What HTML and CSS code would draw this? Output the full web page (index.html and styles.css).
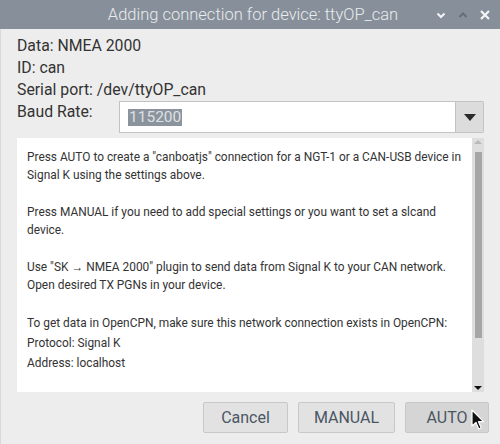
FILE: index.html
```html
<!DOCTYPE html>
<html>
<head>
<meta charset="utf-8">
<link rel="stylesheet" href="styles.css">
</head>
<body>
<div class="window">
  <div class="titlebar">
    <div></div>
    <div class="title">Adding connection for device: ttyOP_can</div>
    <div class="controls">
      <svg class="ctl" width="10" height="8" viewBox="0 0 10 8"><path d="M1.5 2.5 L5 6 L8.5 2.5" fill="none" stroke="#f4f5f6" stroke-width="2"/></svg>
      <svg class="ctl" width="10" height="8" viewBox="0 0 10 8"><path d="M1.5 6 L5 2.5 L8.5 6" fill="none" stroke="#666d75" stroke-width="2"/></svg>
      <svg class="ctl" width="10" height="10" viewBox="0 0 10 10"><path d="M1 1 L9 9 M9 1 L1 9" fill="none" stroke="#f4f5f6" stroke-width="2.2"/></svg>
    </div>
  </div>
  <div class="content">
    <div class="info">Data: NMEA 2000</div>
    <div class="info">ID: can</div>
    <div class="info">Serial port: /dev/ttyOP_can</div>
    <div class="baud-row">
      <div class="info label">Baud Rate:</div>
      <div class="combo">
        <div class="combo-input"><span class="sel">115200</span></div>
        <div class="combo-btn"><svg width="12" height="7" viewBox="0 0 12 7"><path d="M0 0 H12 L6 7 Z" fill="#2a2a2a"/></svg></div>
      </div>
    </div>
    <div class="textbox">
      <div class="text">
        <p class="para">Press AUTO to create a "canboatjs" connection for a NGT-1 or a CAN-USB device in<br>Signal K using the settings above.</p>
        <p class="para">Press MANUAL if you need to add special settings or you want to set a slcand<br>device.</p>
        <p class="para">Use "SK → NMEA 2000" plugin to send data from Signal K to your CAN network.<br>Open desired TX PGNs in your device.</p>
        <p class="para last">To get data in OpenCPN, make sure this network connection exists in OpenCPN:<br>Protocol: Signal K<br>Address: localhost</p>
      </div>
      <div class="scrollbar">
        <svg class="arrow" width="12" height="8" viewBox="0 0 12 8"><path d="M2 6 L6 2 L10 6 Z" fill="#b9b9b9"/></svg>
        <div class="track"><div class="thumb"></div></div>
        <svg class="arrow" width="12" height="8" viewBox="0 0 12 8"><path d="M2 2 H10 L6 6 Z" fill="#111"/></svg>
      </div>
    </div>
    <div class="buttons">
      <div class="btn cancel">Cancel</div>
      <div class="btn manual">MANUAL</div>
      <div class="btn auto">AUTO</div>
    </div>
  </div>
  <svg class="cursor" width="14" height="22" viewBox="0 0 14 22"><path d="M1 1 L1 17 L5 13.5 L7.8 20 L10.2 19 L7.5 12.7 L12.5 12.7 Z" fill="#111" stroke="#fff" stroke-width="1.2" stroke-linejoin="round"/></svg>
</div>
</body>
</html>
```
FILE: styles.css
```css
html, body {
  margin: 0;
  padding: 0;
}
body {
  font-family: Roboto, "Liberation Sans", sans-serif;
  background: #ededed;
}
.window {
  position: relative;
  width: 500px;
  height: 444px;
  background: #ededed;
  overflow: hidden;
}
.titlebar {
  height: 29px;
  background: #87909a;
  display: grid;
  grid-template-columns: 1fr auto 1fr;
  align-items: center;
}
.title {
  color: #e9ebed;
  font-size: 16.5px;
  font-weight: 300;
  padding-left: 6px;
}
.controls {
  display: flex;
  justify-content: flex-end;
  align-items: center;
  gap: 12px;
  padding-right: 10px;
}
.ctl {
  display: block;
}
.content {
  height: 415px;
  box-sizing: border-box;
  border-left: 1px solid #d9d9d9;
  padding: 6px 16px 0 16px;
  display: flex;
  flex-direction: column;
}
.info {
  font-size: 15.8px;
  line-height: 22px;
  color: #333;
  height: 22px;
}
.baud-row {
  display: flex;
  align-items: flex-start;
}
.label {
  width: 102px;
  flex: none;
}
.combo {
  flex: 1;
  display: flex;
  height: 32px;
}
.combo-input {
  flex: 1;
  background: #fff;
  border: 1px solid #c3c3c3;
  box-sizing: border-box;
  display: flex;
  align-items: center;
  padding-left: 8px;
}
.sel {
  background: #8b949d;
  color: #dde0e3;
  font-size: 15.5px;
  line-height: 17px;
  padding: 0 1px;
}
.combo-btn {
  width: 28px;
  box-sizing: border-box;
  background: #dcdcdc;
  border: 1px solid #c3c3c3;
  border-left: none;
  border-radius: 0 2px 2px 0;
  display: flex;
  align-items: center;
  justify-content: center;
}
.combo-btn svg {
  display: block;
}
.textbox {
  margin-top: 5px;
  height: 254px;
  display: flex;
}
.text {
  flex: 1;
  background: #fff;
  padding: 10px 0 0 10px;
  font-size: 11.9px;
  color: #333;
  overflow: hidden;
}
.para {
  margin: 0 0 19px 0;
  line-height: 18px;
}
.para.last {
  margin-top: 5px;
  line-height: 20px;
}
.scrollbar {
  width: 12px;
  background: #dedede;
  display: flex;
  flex-direction: column;
  align-items: center;
}
.arrow {
  display: block;
  flex: none;
}
.track {
  flex: 1;
  width: 100%;
  padding: 6px 0 0 0;
  box-sizing: border-box;
  display: flex;
  justify-content: center;
}
.thumb {
  width: 7px;
  height: 186px;
  background: #a6a6a6;
}
.buttons {
  margin-top: 10px;
  margin-right: -5px;
  display: flex;
  justify-content: flex-end;
  gap: 10px;
}
.btn {
  height: 31px;
  box-sizing: border-box;
  border: 1px solid #c8c8c8;
  border-radius: 2px;
  background: #e2e2e2;
  color: #4a5663;
  font-size: 16px;
  display: flex;
  align-items: center;
  justify-content: center;
}
.cancel { width: 85px; }
.manual { width: 97px; }
.auto { width: 84px; background: #d5d5d5; }
.cursor {
  position: absolute;
  left: 471px;
  top: 409px;
}
```
